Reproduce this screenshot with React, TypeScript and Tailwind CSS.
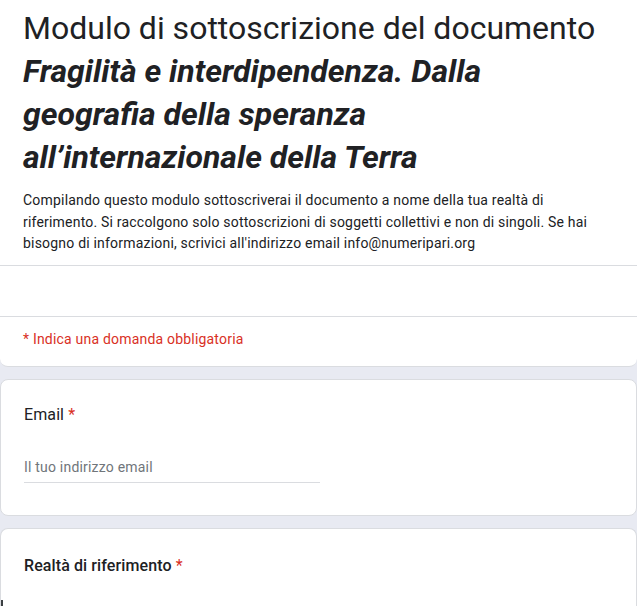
export default function App() {
  return (
    <div className="min-h-[606px] bg-[#e8eaf2] font-['Roboto',sans-serif] text-[#202124]">
      <div className="flex flex-col gap-3">
        <section className="rounded-b-lg border-b border-[#dadce0] bg-white">
          <div className="px-[23px] pt-[7px]">
            <h1 className="text-[32px] leading-[43px] font-normal">
              Modulo di sottoscrizione del documento
              <br />
              <span className="font-bold italic">
                Fragilità e interdipendenza. Dalla
                <br />
                geografia della speranza
                <br />
                all’internazionale della Terra
              </span>
            </h1>
            <p className="mt-[11px] pb-[10px] text-[14px] leading-[21.5px] tracking-[0.2px]">
              Compilando questo modulo sottoscriverai il documento a nome della tua realtà di riferimento. Si raccolgono solo
              sottoscrizioni di soggetti collettivi e non di singoli. Se hai bisogno di informazioni, scrivici all'indirizzo
              email info@numeripari.org
            </p>
          </div>
          <div className="h-[52px] border-y border-[#dadce0]" />
          <div className="px-[23px] pt-[12px] pb-[17px] text-[14px] leading-[20px] tracking-[0.2px] text-[#d93025]">
            * Indica una domanda obbligatoria
          </div>
        </section>

        <section className="rounded-lg border border-[#dadce0] bg-white px-[23px] pt-[23px] pb-[32px]">
          <div className="text-[16px] leading-[24px] tracking-[0.1px]">
            Email <span className="text-[#d93025]">*</span>
          </div>
          <div className="mt-[30px] w-[296px] border-b border-[#dadce0] pb-[5px] text-[14px] leading-[20px] tracking-[0.2px] text-[#70757a]">
            Il tuo indirizzo email
          </div>
        </section>

        <section className="relative h-[80px] rounded-t-lg border border-b-0 border-[#dadce0] bg-white px-[23px] pt-[25px]">
          <div className="text-[16px] leading-[24px] font-medium tracking-[0.1px]">
            Realtà di riferimento <span className="font-normal text-[#d93025]">*</span>
          </div>
          <div className="absolute bottom-0 left-0 h-[8px] w-[2px] bg-[#3c4043]" />
        </section>
      </div>
    </div>
  );
}
